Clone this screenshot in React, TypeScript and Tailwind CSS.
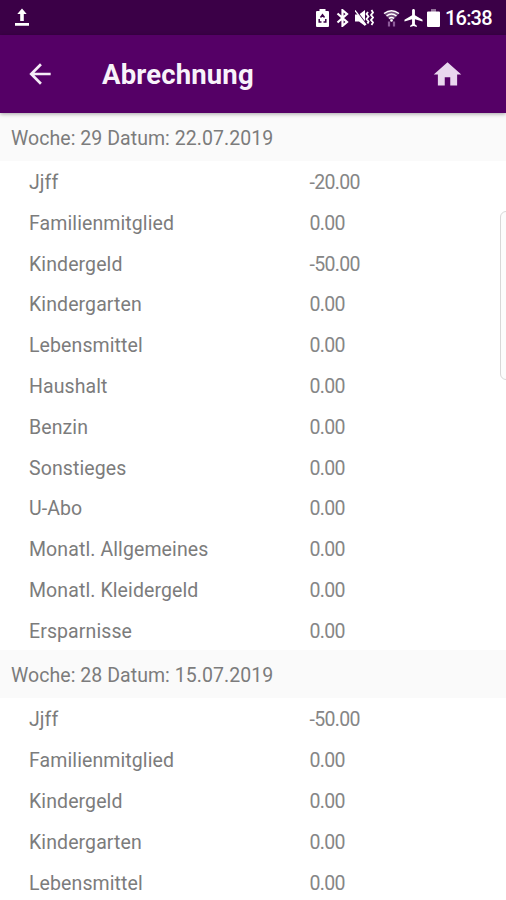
import { MdArrowBack, MdHome } from "react-icons/md";

const weeks = [
  {
    title: "Woche: 29 Datum: 22.07.2019",
    rows: [
      ["Jjff", "-20.00"],
      ["Familienmitglied", "0.00"],
      ["Kindergeld", "-50.00"],
      ["Kindergarten", "0.00"],
      ["Lebensmittel", "0.00"],
      ["Haushalt", "0.00"],
      ["Benzin", "0.00"],
      ["Sonstieges", "0.00"],
      ["U-Abo", "0.00"],
      ["Monatl. Allgemeines", "0.00"],
      ["Monatl. Kleidergeld", "0.00"],
      ["Ersparnisse", "0.00"],
    ],
  },
  {
    title: "Woche: 28 Datum: 15.07.2019",
    rows: [
      ["Jjff", "-50.00"],
      ["Familienmitglied", "0.00"],
      ["Kindergeld", "0.00"],
      ["Kindergarten", "0.00"],
      ["Lebensmittel", "0.00"],
    ],
  },
];

function StatusBar() {
  return (
    <div className="flex h-[35px] shrink-0 items-center bg-[#3b0047] pl-[15px] pr-[14px] text-white">
      <svg width="14" height="19" viewBox="0 0 14 19" fill="currentColor">
        <path d="M7 0.5 11.7 6H8.8V13H5.2V6H2.3zM0 15h14v2.7H0z" />
      </svg>
      <div className="ml-auto flex items-center">
        <svg width="13" height="18" viewBox="0 0 13 18" fill="currentColor">
          <path d="M3.5 0h6v2H12a1 1 0 0 1 1 1v14a1 1 0 0 1-1 1H1a1 1 0 0 1-1-1V3a1 1 0 0 1 1-1h2.5z" />
          <path
            d="M4.5 8.5 6.5 5.8 8.5 8.5M9.8 10v3H7.5M5.5 13H3.2v-3"
            fill="none"
            stroke="#3b0047"
            strokeWidth="1.5"
          />
        </svg>
        <svg className="ml-[7px]" width="13" height="18" viewBox="0 0 13 18" fill="none">
          <path d="M1.5 4.5 11 13 6.5 16.8V1.2L11 5 1.5 13.5" stroke="currentColor" strokeWidth="2.2" />
        </svg>
        <svg className="ml-[6px]" width="19" height="18" viewBox="0 0 19 18" fill="currentColor">
          <path d="M0 5.5h4L10 1v16L4 12.5H0z" />
          <path d="M1 1.5 12 16" stroke="#3b0047" strokeWidth="1.3" />
          <path d="M0 1.5 11 16" stroke="currentColor" strokeWidth="1.3" />
          <path
            d="M13 3l-1.5 2 2 2.5-2 2.5 2 2.5-1 2M16.5 1l1.5 2.5-2 2.5 2 2.5-2 2.5 2 2.5-1.5 2.5"
            fill="none"
            stroke="currentColor"
            strokeWidth="1.8"
          />
        </svg>
        <svg className="ml-[9px]" width="17" height="18" viewBox="0 0 17 18" fill="none">
          <path d="M1 4.5Q8.5-1 16 4.5L8.5 12.5z" fill="#fff" fillOpacity="0.3" />
          <path d="M1 4.5Q8.5-1 16 4.5M3.5 7Q8.5 3.2 13.5 7M6 9.5Q8.5 7.5 11 9.5" stroke="#fff" strokeWidth="1.5" />
          <circle cx="8.5" cy="11.5" r="1.3" fill="#fff" />
          <path d="M6 12.5v5M11 17.5v-5" stroke="#8d5b99" strokeWidth="2.2" />
        </svg>
        <svg className="ml-[4px]" width="19" height="18" viewBox="2 2 20 20" fill="currentColor" preserveAspectRatio="none">
          <path d="M21.5 16v-2l-8-5V3.5c0-.83-.67-1.5-1.5-1.5s-1.5.67-1.5 1.5V9l-8 5v2l8-2.5V19l-2 1.5V22l3.5-1 3.5 1v-1.5l-2-1.5v-5.5z" />
        </svg>
        <svg className="ml-[4px]" width="13" height="18" viewBox="0 0 13 18" fill="currentColor">
          <path d="M4 0h5v3H4z" opacity="0.45" />
          <path d="M1 2.5h11a1 1 0 0 1 1 1V17a1 1 0 0 1-1 1H1a1 1 0 0 1-1-1V3.5a1 1 0 0 1 1-1z" />
        </svg>
        <span className="ml-[5px] w-[47px] whitespace-nowrap text-[20px] font-medium leading-none tracking-[-0.8px]">
          16:38
        </span>
      </div>
    </div>
  );
}

function Toolbar() {
  return (
    <header className="z-10 flex h-[78px] shrink-0 items-center bg-[#550066] pl-[24px] pr-[42px] shadow-[0_1px_4px_rgba(0,0,0,0.35)]">
      <button aria-label="Zurück">
        <MdArrowBack className="size-[32px] text-[#f5ecf7]" />
      </button>
      <h1 className="ml-[46px] mt-[2px] text-[27.5px] font-bold leading-none tracking-[0.15px] text-[#f8f2fa]">
        Abrechnung
      </h1>
      <button aria-label="Start" className="ml-auto">
        <MdHome className="size-[33px] text-[#e9d6ee]" />
      </button>
    </header>
  );
}

export default function App() {
  return (
    <div className="relative flex h-[900px] w-[506px] flex-col overflow-hidden bg-white font-['Roboto',sans-serif]">
      <StatusBar />
      <Toolbar />
      <main className="text-[19.5px] leading-none text-[#7c7c7c]">
        {weeks.map((week) => (
          <section key={week.title}>
            <h2 className="flex h-[47.5px] items-center bg-[#fafafa] pl-[11px] pt-[4px] tracking-[0.05px]">
              {week.title}
            </h2>
            {week.rows.map(([label, amount]) => (
              <div key={label} className="flex h-[40.83px] items-center pl-[29px] pt-[3.4px]">
                <span className="w-[280.5px] tracking-[0.1px]">{label}</span>
                <span className="tracking-[-0.7px] text-[#868686]">{amount}</span>
              </div>
            ))}
          </section>
        ))}
      </main>
      <div className="absolute -right-[6px] top-[211px] h-[169px] w-[12px] rounded-[6px] border border-[#d8d8d8] bg-[#fcfcfc]" />
    </div>
  );
}
